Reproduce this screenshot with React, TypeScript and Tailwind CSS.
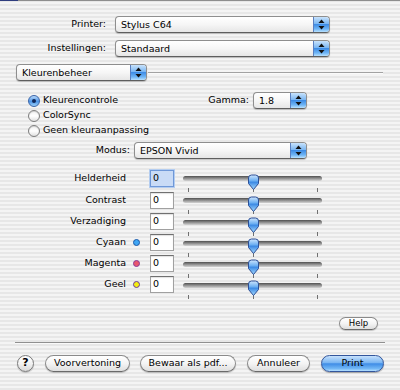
import React from "react";

const FONT = "font-['DejaVu_Sans','Lucida_Grande',sans-serif]";

function Arrows() {
  return (
    <svg width="7" height="11" viewBox="0 0 7 11">
      <path d="M3.5 0.5 L6.5 4 H0.5 Z" fill="#111" />
      <path d="M3.5 10.5 L6.5 7 H0.5 Z" fill="#111" />
    </svg>
  );
}

function Popup({ w, text }: { w: string; text: string }) {
  return (
    <div
      className={`${w} flex h-[17px] shrink-0 rounded-[4px] border border-[#8e8e8e] border-b-[#5e5e5e] bg-[linear-gradient(#ffffff,#f6f6f6_50%,#e6e6e6)] shadow-[0_1px_1px_rgba(0,0,0,0.2)] overflow-hidden`}
    >
      <span className="flex-1 pl-[5px] leading-[15px] whitespace-nowrap overflow-hidden">{text}</span>
      <span className="flex h-full w-[16px] items-center justify-center border-l border-[#5a7fc0] bg-[linear-gradient(#c8e2fc,#7ab6f2_45%,#3f8de6_50%,#6fb5f5_80%,#b9e2ff)]">
        <Arrows />
      </span>
    </div>
  );
}

function Radio({ on, label }: { on?: boolean; label: string }) {
  return (
    <div className="flex h-[15px] items-center pl-[28px]">
      {on ? (
        <span className="flex h-[12px] w-[12px] items-center justify-center rounded-full border border-[#3a64a8] bg-[linear-gradient(#b8d8fa,#4d95e6_55%,#9ad0fb)]">
          <span className="h-[4px] w-[4px] rounded-full bg-[#10275a]" />
        </span>
      ) : (
        <span className="h-[12px] w-[12px] rounded-full border border-[#7e7e7e] bg-[linear-gradient(#f2f2f2,#ffffff_50%,#e0e0e0)] shadow-[inset_0_1px_1px_rgba(0,0,0,0.15)]" />
      )}
      <span className="ml-[3px]">{label}</span>
    </div>
  );
}

function Thumb() {
  return (
    <svg width="13" height="17" viewBox="0 0 13 17" className="absolute left-[64px] top-[calc(50%-4.5px)]">
      <defs>
        <linearGradient id="tg" x1="0" y1="0" x2="0" y2="1">
          <stop offset="0" stopColor="#cfe6fd" />
          <stop offset="0.4" stopColor="#6aaef2" />
          <stop offset="0.5" stopColor="#3d8ae4" />
          <stop offset="1" stopColor="#a8dcff" />
        </linearGradient>
      </defs>
      <path
        d="M1.5 4 Q1.5 1 4.5 1 H8.5 Q11.5 1 11.5 4 V9.5 L6.5 15.5 L1.5 9.5 Z"
        fill="url(#tg)"
        stroke="#2d4f96"
        strokeWidth="1"
      />
    </svg>
  );
}

function Slider() {
  return (
    <div className="relative ml-[9px] h-full w-[139px]">
      <div className="absolute left-0 right-0 top-[calc(50%-2px)] h-[5px] rounded-full bg-[linear-gradient(#4f4f4f,#8c8c8c_45%,#d4d4d4)]" />
      <div className="absolute left-[5px] top-[calc(50%+10px)] h-[4px] w-px bg-[#707070]" />
      <div className="absolute left-[70px] top-[calc(50%+10px)] h-[4px] w-px bg-[#707070]" />
      <div className="absolute left-[134px] top-[calc(50%+10px)] h-[4px] w-px bg-[#707070]" />
      <Thumb />
    </div>
  );
}

function SliderRow({
  label,
  h,
  dot,
  focus,
}: {
  label: string;
  h: string;
  dot?: string;
  focus?: boolean;
}) {
  return (
    <div className={`${h} flex items-center`}>
      <span className="w-[126px] shrink-0 text-right">{label}</span>
      <span className="flex w-[24px] shrink-0 items-center">
        {dot ? <span className={`ml-[7px] h-[7px] w-[7px] rounded-full border ${dot}`} /> : null}
      </span>
      <span
        className={
          focus
            ? "flex h-[17px] w-[24px] shrink-0 items-center border border-[#6f98d8] bg-[#c9dbf6] pl-[2px] shadow-[0_0_0_1px_#b4cdf0]"
            : "flex h-[17px] w-[24px] shrink-0 items-center border border-[#a0a0a0] border-t-[#707070] bg-white pl-[2px] shadow-[inset_0_1px_1px_rgba(0,0,0,0.12)]"
        }
      >
        0
      </span>
      <Slider />
    </div>
  );
}

function Btn({ w, text, primary }: { w: string; text: string; primary?: boolean }) {
  return (
    <div
      className={
        primary
          ? `${w} flex h-[17px] shrink-0 items-center justify-center rounded-full border border-[#33569c] bg-[linear-gradient(#c6e1fc,#79b5f2_45%,#3f8ce6_52%,#74b9f6_85%,#b8e0ff)] shadow-[0_1px_1px_rgba(0,0,0,0.3)]`
          : `${w} flex h-[17px] shrink-0 items-center justify-center rounded-full border border-[#8a8a8a] border-b-[#6a6a6a] bg-[linear-gradient(#ffffff,#f4f4f4_50%,#dedede)] shadow-[0_1px_1px_rgba(0,0,0,0.2)]`
      }
    >
      {text}
    </div>
  );
}

export default function App() {
  return (
    <div
      className={`${FONT} relative flex h-[390px] w-[400px] flex-col overflow-hidden text-[9.5px] text-black bg-[image:repeating-linear-gradient(180deg,#e7e7e7_0px,#e7e7e7_2px,#f4f4f4_2px,#f4f4f4_4px)]`}
    >
      <div className="flex h-px shrink-0 bg-[#8e8e8e]">
        <span className="h-px w-[18px] bg-[#2f3d7e]" />
      </div>

      <div className="mt-[15px] flex h-[17px] items-center">
        <span className="w-[106px] text-right">Printer:</span>
        <span className="ml-[9px]">
          <Popup w="w-[215px]" text="Stylus C64" />
        </span>
      </div>

      <div className="mt-[7px] flex h-[17px] items-center">
        <span className="w-[106px] text-right">Instellingen:</span>
        <span className="ml-[9px]">
          <Popup w="w-[215px]" text="Standaard" />
        </span>
      </div>

      <div className="mt-[7px] flex h-[17px] items-center pl-[16px]">
        <Popup w="w-[131px]" text="Kleurenbeheer" />
        <div className="ml-[1px] h-[2px] w-[235px] border-t border-[#a2a2a2] bg-[#fafafa]" />
      </div>

      <div className="mt-[11px] flex h-[46px]">
        <div className="w-[205px] shrink-0 pt-[1px]">
          <Radio on label="Kleurencontrole" />
          <Radio label="ColorSync" />
          <Radio label="Geen kleuraanpassing" />
        </div>
        <div className="flex h-[17px] items-center">
          <span className="w-[44px] text-right">Gamma:</span>
          <span className="ml-[4px]">
            <Popup w="w-[54px]" text="1.8" />
          </span>
        </div>
      </div>

      <div className="mt-[4px] flex h-[17px] items-center">
        <span className="w-[130px] text-right">Modus:</span>
        <span className="ml-[4px]">
          <Popup w="w-[173px]" text="EPSON Vivid" />
        </span>
      </div>

      <div className="mt-[8px] flex flex-col">
        <SliderRow label="Helderheid" h="h-[22px]" focus />
        <SliderRow label="Contrast" h="h-[22px]" />
        <SliderRow label="Verzadiging" h="h-[21px]" />
        <SliderRow label="Cyaan" h="h-[21px]" dot="border-[#1e5aa8] bg-[#3fa6f4]" />
        <SliderRow label="Magenta" h="h-[21px]" dot="border-[#8a3a9a] bg-[#e8566e]" />
        <SliderRow label="Geel" h="h-[21px]" dot="border-[#6a3aa0] bg-[#f4ee10]" />
      </div>

      <div className="mt-[22px] flex justify-end pr-[22px]">
        <div className="flex h-[13px] w-[39px] items-center justify-center rounded-full border border-[#8a8a8a] border-b-[#6a6a6a] bg-[linear-gradient(#ffffff,#f4f4f4_50%,#dedede)] text-[8.5px] shadow-[0_1px_1px_rgba(0,0,0,0.2)]">
          Help
        </div>
      </div>

      <div className="ml-[15px] mt-[12px] h-[2px] w-[370px] border-t border-[#909090] bg-[#fafafa]" />

      <div className="mt-[11px] flex items-center pl-[17px]">
        <div className="flex h-[17px] w-[17px] shrink-0 items-center justify-center rounded-full border border-[#7a7a7a] bg-[linear-gradient(#ffffff,#f2f2f2_50%,#d8d8d8)] text-[11px] font-bold shadow-[0_1px_1px_rgba(0,0,0,0.2)]">
          ?
        </div>
        <span className="ml-[11px]">
          <Btn w="w-[85px]" text="Voorvertoning" />
        </span>
        <span className="ml-[10px]">
          <Btn w="w-[96px]" text="Bewaar als pdf..." />
        </span>
        <span className="ml-[11px]">
          <Btn w="w-[63px]" text="Annuleer" />
        </span>
        <span className="ml-[11px]">
          <Btn w="w-[63px]" text="Print" primary />
        </span>
      </div>
    </div>
  );
}
